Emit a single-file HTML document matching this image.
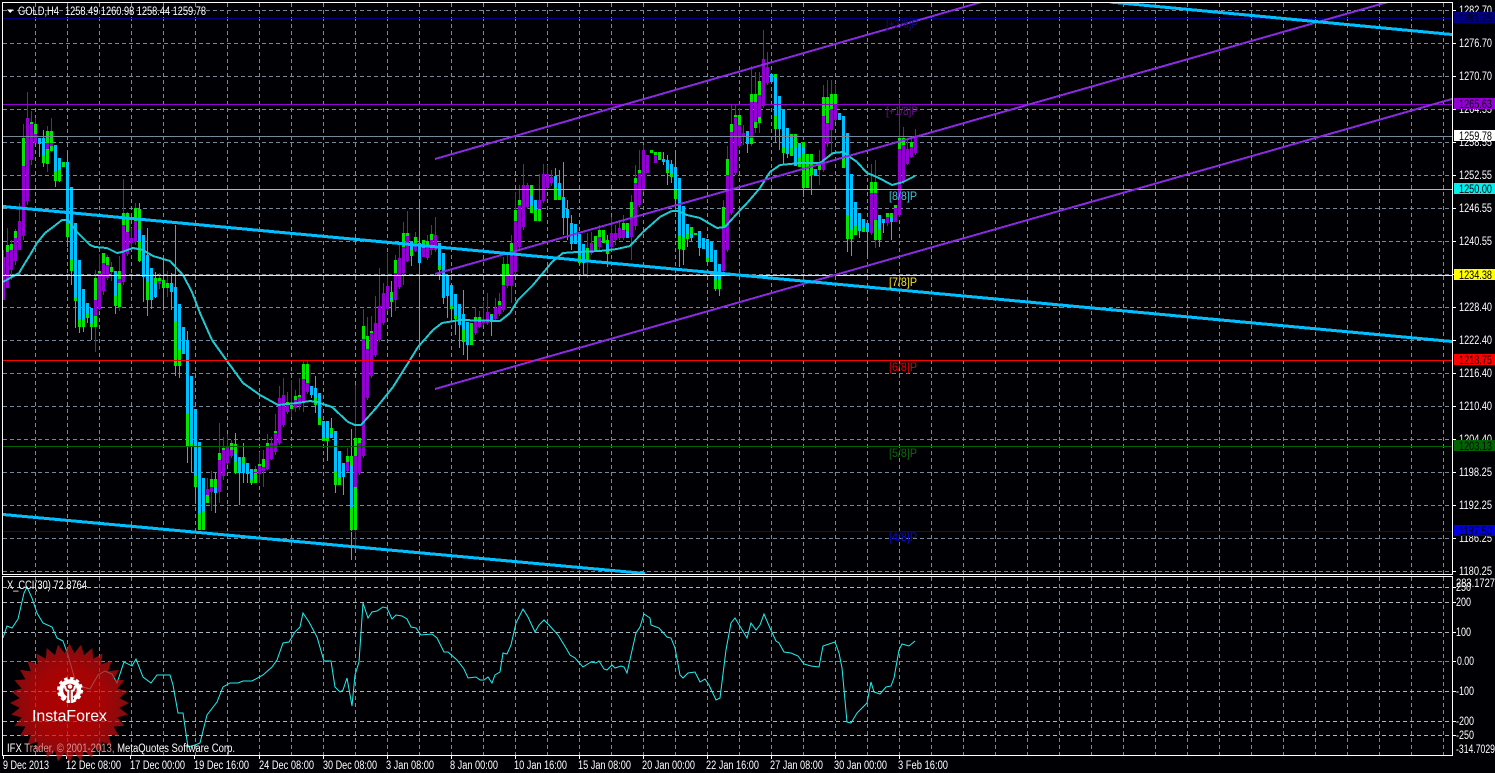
<!DOCTYPE html>
<html><head><meta charset="utf-8"><title>GOLD,H4</title>
<style>
html,body{margin:0;padding:0;background:#000;width:1495px;height:773px;overflow:hidden}
svg{display:block}
text{font-family:"Liberation Sans",sans-serif;font-size:11.5px;fill:#fff}
.g{stroke:#778899;stroke-width:1;stroke-dasharray:4 3;fill:none}
.s{stroke:#aeb6c0;stroke-width:1;stroke-dasharray:4 3;fill:none}
.c{shape-rendering:crispEdges;fill:none}
.k{fill:#000}
.l{font-size:12px}
</style></head><body>
<svg width="1495" height="773" viewBox="0 0 1495 773" xmlns="http://www.w3.org/2000/svg">
<defs>
<clipPath id="m"><rect x="3" y="3" width="1449" height="571"/></clipPath>
<clipPath id="n"><rect x="3" y="577" width="1449" height="178"/></clipPath>
<radialGradient id="rg" gradientUnits="userSpaceOnUse" cx="0" cy="0" r="60"><stop offset="0" stop-color="#f00000"/><stop offset=".55" stop-color="#e60505"/><stop offset="1" stop-color="#b21114"/></radialGradient>
<linearGradient id="tg" gradientUnits="userSpaceOnUse" x1="7" y1="0" x2="235" y2="0"><stop offset="0" stop-color="#fff"/><stop offset=".07" stop-color="#fff"/><stop offset=".1" stop-color="#d89090"/><stop offset=".47" stop-color="#d89090"/><stop offset=".5" stop-color="#fff"/><stop offset="1" stop-color="#fff"/></linearGradient>
</defs>
<rect width="1495" height="773" fill="#000004"/>

<g class="c">
<path class="g" d="M3 10.5H1452M3 43.5H1452M3 76.5H1452M3 109.5H1452M3 142.5H1452M3 175.5H1452M3 208.5H1452M3 241.5H1452M3 274.5H1452M3 307.5H1452M3 340.5H1452M3 373.5H1452M3 406.5H1452M3 439.5H1452M3 472.5H1452M3 505.5H1452M3 538.5H1452M3 571.5H1452"/>
<path class="g" d="M35.5 3V574M67.5 3V574M99.5 3V574M131.5 3V574M163.5 3V574M195.5 3V574M227.5 3V574M259.5 3V574M291.5 3V574M323.5 3V574M355.5 3V574M387.5 3V574M419.5 3V574M451.5 3V574M483.5 3V574M515.5 3V574M547.5 3V574M579.5 3V574M611.5 3V574M643.5 3V574M675.5 3V574M707.5 3V574M739.5 3V574M771.5 3V574M803.5 3V574M835.5 3V574M867.5 3V574M899.5 3V574M931.5 3V574M963.5 3V574M995.5 3V574M1027.5 3V574M1059.5 3V574M1091.5 3V574M1123.5 3V574M1155.5 3V574M1187.5 3V574M1219.5 3V574M1251.5 3V574M1283.5 3V574M1315.5 3V574M1347.5 3V574M1379.5 3V574M1411.5 3V574M1443.5 3V574"/>
<path class="g" d="M35.5 577V755M67.5 577V755M99.5 577V755M131.5 577V755M163.5 577V755M195.5 577V755M227.5 577V755M259.5 577V755M291.5 577V755M323.5 577V755M355.5 577V755M387.5 577V755M419.5 577V755M451.5 577V755M483.5 577V755M515.5 577V755M547.5 577V755M579.5 577V755M611.5 577V755M643.5 577V755M675.5 577V755M707.5 577V755M739.5 577V755M771.5 577V755M803.5 577V755M835.5 577V755M867.5 577V755M899.5 577V755M931.5 577V755M963.5 577V755M995.5 577V755M1027.5 577V755M1059.5 577V755M1091.5 577V755M1123.5 577V755M1155.5 577V755M1187.5 577V755M1219.5 577V755M1251.5 577V755M1283.5 577V755M1315.5 577V755M1347.5 577V755M1379.5 577V755M1411.5 577V755M1443.5 577V755"/>
<path class="s" d="M3 587.5H1452M3 602.5H1452M3 632.5H1452M3 691.5H1452M3 721.5H1452M3 735.5H1452"/>
<path class="g" d="M3 661.5H1452"/>
</g>

<g class="c" clip-path="url(#m)">
<!-- purple wicks -->
<path stroke="#9400D3" stroke-width="1" d="M3.5 250V300M7.5 228V288M11.5 240V280M15.5 229V265M19.5 203V250M23.5 124V240M27.5 92V205M31.5 111V165M35.5 118V143M47.5 126V172M51.5 118V152M95.5 270V352M99.5 254V310M103.5 253V295M107.5 255V280M111.5 262V281M119.5 256V311M123.5 179V285M127.5 212V256M131.5 228V250M135.5 203V245M159.5 273V289M167.5 271V297M207.5 478V503M211.5 471V511M219.5 423V503M223.5 437V480M227.5 434V465M231.5 440V458M255.5 466V483M259.5 452V483M263.5 450V487M267.5 434V470M271.5 437V460M275.5 414V455M279.5 386V445M283.5 378V427M287.5 392V414M291.5 380V417M295.5 390V412M299.5 378V410M303.5 361V412M307.5 361V394M347.5 448V472M355.5 385V545M359.5 438V475M363.5 309V458M367.5 317V400M371.5 316V378M375.5 296V357M379.5 268V342M383.5 283V325M387.5 253V311M395.5 255V311M399.5 244V289M403.5 222V285M407.5 211V262M415.5 232V252M427.5 235V260M431.5 225V255M435.5 217V252M475.5 307V335M479.5 311V328M483.5 302V325M487.5 293V325M495.5 298V322M499.5 293V316M503.5 257V312M507.5 255V288M511.5 235V303M515.5 192V275M519.5 185V250M523.5 164V230M527.5 183V209M539.5 174V222M543.5 164V203M547.5 165V190M551.5 170V186M587.5 233V278M591.5 232V255M599.5 225V250M611.5 217V250M615.5 225V245M619.5 220V240M623.5 215V240M631.5 195V260M635.5 165V230M639.5 150V207M643.5 145V192M723.5 200V275M727.5 146V252M731.5 105V215M735.5 105V175M739.5 108V148M743.5 125V145M751.5 66V146M755.5 72V133M759.5 72V133M763.5 30V108M767.5 52V85M819.5 150V185M823.5 85V172M827.5 80V147M831.5 80V153M835.5 85V122M871.5 164V235M875.5 160V248M887.5 213V226M895.5 205V222M899.5 99V217M903.5 127V184M907.5 140V165M911.5 138V158M915.5 129V155"/>
<!-- blue wicks -->
<path stroke="#00BFFF" stroke-width="1" d="M39.5 138V157M43.5 130V167M55.5 145V187M59.5 158V182M67.5 152V247M71.5 187V285M75.5 223V328M79.5 260V333M83.5 289V332M87.5 303V323M91.5 308V340M115.5 271V314M139.5 203V262M143.5 235V302M147.5 228V316M151.5 268V309M155.5 272V298M163.5 257V310M171.5 273V310M175.5 225V376M179.5 304V378M187.5 331V463M191.5 376V473M195.5 409V503M215.5 472V513M235.5 433V474M239.5 457V505M243.5 443V483M247.5 463V483M251.5 469V485M315.5 376V413M311.5 386V398M327.5 421V461M331.5 418V438M335.5 431V493M343.5 463V495M351.5 429V560M391.5 281V317M419.5 200V346M411.5 242V266M439.5 243V280M443.5 253V304M447.5 275V318M451.5 285V320M455.5 294V335M459.5 304V348M463.5 290V355M467.5 322V360M491.5 314V336M563.5 162V235M567.5 200V240M571.5 215V250M555.5 168V190M559.5 170V197M579.5 234V265M583.5 244V275M607.5 235V267M663.5 152V165M667.5 155V185M671.5 160V183M675.5 150V205M679.5 178V267M683.5 206V265M687.5 224V247M691.5 227V241M699.5 231V256M715.5 250V291M719.5 264V296M747.5 131V153M775.5 74V142M779.5 96V150M783.5 109V165M787.5 128V158M803.5 142V197M811.5 154V195M847.5 133V252M851.5 174V256M859.5 213V238M867.5 223V257M879.5 215V247M891.5 213V240M883.5 219V233"/>
<!-- purple bodies -->
<path stroke="#9400D3" stroke-width="3" d="M3.5 257V300M7.5 252V288M11.5 250V270M15.5 238V261M19.5 221V250M23.5 166V236M27.5 118V201M31.5 124V160M35.5 134V143M47.5 143V149M51.5 143V146M95.5 300V316M99.5 273V309M103.5 263V291M107.5 265V278M119.5 279V283M123.5 225V282M127.5 232V254M131.5 238V243M135.5 221V242M159.5 281V284M207.5 489V495M211.5 487V492M219.5 460V492M223.5 450V476M227.5 447V463M231.5 450V456M255.5 472V473M259.5 466V474M263.5 467V471M267.5 446V469M271.5 443V459M275.5 433V452M279.5 398V443M283.5 395V425M287.5 405V412M295.5 400V408M299.5 397V405M303.5 379V402M307.5 383V392M347.5 462V471M355.5 456V487M359.5 443V473M363.5 339V456M367.5 349V398M371.5 333V376M375.5 323V355M379.5 306V340M383.5 293V323M387.5 286V309M395.5 273V300M399.5 258V287M403.5 247V273M407.5 236V261M415.5 243V251M423.5 248V257M427.5 247V258M431.5 240V250M435.5 235V250M475.5 320V333M479.5 322V327M483.5 321V323M487.5 312V323M495.5 308V319M499.5 305V314M503.5 285V310M507.5 275V286M511.5 252V286M515.5 221V272M519.5 205V247M523.5 185V227M527.5 185V207M539.5 200V209M543.5 174V201M547.5 174V188M551.5 177V183M591.5 243V253M599.5 237V247M611.5 233V247M615.5 233V240M619.5 228V238M623.5 230V238M631.5 217V237M635.5 183V226M639.5 173V205M643.5 150V189M647.5 155V173M655.5 155V163M723.5 227V271M727.5 175V250M731.5 132V213M735.5 117V173M739.5 125V146M743.5 133V136M751.5 102V138M755.5 102V122M759.5 95V117M763.5 59V106M767.5 67V83M823.5 116V170M827.5 123V144M831.5 109V130M835.5 104V120M871.5 193V233M875.5 193V220M887.5 217V223M895.5 208V222M899.5 149V215M903.5 145V182M907.5 149V164M911.5 147V157M915.5 137V153"/>
<!-- blue bodies -->
<path stroke="#00BFFF" stroke-width="3" d="M39.5 138V144M43.5 138V156M55.5 145V171M59.5 158V170M67.5 162V223M71.5 187V259M75.5 223V298M79.5 260V319M83.5 289V319M87.5 303V313M91.5 308V323M115.5 271V296M139.5 230V242M143.5 235V277M147.5 255V282M151.5 268V300M155.5 283V297M171.5 283V292M175.5 287V322M179.5 304V350M183.5 327V354M187.5 340V413M191.5 376V444M195.5 409V476M199.5 442V513M203.5 478V511M215.5 488V493M235.5 453V462M239.5 457V473M243.5 464V473M247.5 463V474M251.5 469V479M311.5 386V395M315.5 388V398M319.5 393V418M323.5 421V437M327.5 421V438M331.5 433V438M335.5 431V471M339.5 451V477M343.5 463V477M351.5 465V507M391.5 297V300M411.5 242V250M419.5 243V263M439.5 243V265M443.5 253V298M447.5 275V296M451.5 285V305M455.5 294V315M459.5 304V325M463.5 314V329M467.5 322V345M491.5 316V322M531.5 196V205M535.5 200V210M555.5 176V188M559.5 183V195M563.5 197V218M567.5 209V218M571.5 223V244M575.5 224V244M579.5 234V255M583.5 244V263M607.5 244V250M627.5 232V238M663.5 159V162M667.5 160V170M671.5 164V174M675.5 167V190M679.5 178V235M683.5 206V237M687.5 224V234M691.5 234V238M699.5 231V248M703.5 238V249M707.5 239V257M711.5 242V262M715.5 250V280M719.5 264V280M747.5 131V144M771.5 74V82M775.5 77V115M779.5 96V129M783.5 109V147M787.5 128V154M791.5 135V148M795.5 147V166M799.5 143V157M803.5 147V154M815.5 169V176M839.5 113V120M843.5 116V158M847.5 133V215M851.5 174V230M855.5 202V226M859.5 213V231M863.5 219V227M867.5 223V232M879.5 215V229M883.5 219V223M891.5 217V222"/>
<!-- green bodies -->
<path stroke="#00E800" stroke-width="3" d="M7.5 245V252M11.5 244V250M15.5 231V238M23.5 138V166M31.5 122V124M35.5 124V134M43.5 156V163M47.5 131V143M47.5 149V164M51.5 131V143M51.5 146V151M55.5 171V181M59.5 170V181M63.5 162V167M67.5 223V237M71.5 259V271M75.5 298V301M79.5 319V327M83.5 319V327M87.5 313V318M91.5 323V327M95.5 278V300M95.5 316V327M99.5 271V273M103.5 253V263M107.5 257V265M111.5 267V272M115.5 296V306M119.5 271V279M119.5 283V307M123.5 213V225M127.5 213V232M135.5 208V221M139.5 209V230M139.5 242V261M147.5 282V300M155.5 278V283M159.5 278V281M163.5 280V288M167.5 283V288M175.5 322V366M179.5 350V366M187.5 413V446M191.5 444V446M195.5 476V487M199.5 513V530M203.5 511V530M207.5 495V503M211.5 479V487M215.5 479V488M219.5 453V460M223.5 448V450M231.5 443V450M235.5 444V453M235.5 462V473M243.5 457V464M251.5 479V483M255.5 469V472M255.5 473V483M259.5 464V466M263.5 459V467M267.5 443V446M275.5 431V433M287.5 402V405M291.5 405V409M295.5 396V400M299.5 395V397M303.5 364V379M307.5 364V383M315.5 398V405M319.5 418V425M323.5 437V441M327.5 438V441M331.5 428V433M335.5 471V485M339.5 477V485M347.5 456V462M351.5 456V465M351.5 507V530M355.5 438V456M355.5 487V530M359.5 438V443M363.5 326V339M367.5 336V349M371.5 331V333M391.5 292V297M391.5 300V302M395.5 260V273M403.5 233V247M407.5 233V236M411.5 250V256M415.5 237V243M423.5 240V248M427.5 241V247M431.5 234V240M439.5 265V270M451.5 305V309M455.5 315V319M463.5 329V342M471.5 323V345M475.5 317V320M479.5 317V322M491.5 314V316M499.5 301V305M503.5 264V285M507.5 264V275M511.5 243V252M515.5 210V221M519.5 200V205M531.5 185V196M531.5 205V213M535.5 210V221M539.5 209V221M555.5 188V200M559.5 195V200M579.5 255V263M587.5 248V261M595.5 236V250M599.5 230V237M603.5 230V243M607.5 240V244M607.5 250V254M623.5 223V230M627.5 223V232M631.5 202V217M635.5 178V183M639.5 170V173M651.5 150V153M655.5 152V155M659.5 152V160M667.5 170V173M671.5 174V177M675.5 190V199M679.5 235V249M683.5 237V250M687.5 234V239M691.5 227V234M695.5 233V235M707.5 257V262M715.5 280V289M719.5 280V289M723.5 207V227M727.5 159V175M731.5 124V132M735.5 115V117M739.5 115V125M751.5 94V102M751.5 138V144M755.5 94V102M755.5 122V128M759.5 81V95M759.5 117V123M775.5 74V77M775.5 115V129M783.5 147V153M791.5 134V135M791.5 148V156M795.5 134V147M799.5 157V167M803.5 142V147M803.5 154V188M807.5 154V188M811.5 154V175M819.5 163V170M823.5 97V116M827.5 97V123M831.5 94V109M835.5 94V104M843.5 158V168M847.5 215V239M851.5 230V239M855.5 226V235M863.5 227V232M871.5 182V193M875.5 182V193M875.5 220V240M879.5 229V240M887.5 213V217M891.5 213V217M895.5 205V208M899.5 138V149M903.5 138V145M911.5 142V147"/>

<!-- moving average -->
<polyline fill="none" stroke="#1FC9D2" stroke-width="2" points="3,282 10,278 19,273 25,263 30,255 37,243 45,233 53,227 62,220 68,220 77,232 90,245 95,247 107,248 117,253 122,252 133,248 143,250 153,256 170,261 183,275 192,292 200,313 212,340 227,361 243,383 260,395 278,405 297,403 310,401 317,402 332,407 348,422 355,425 361,425 377,407 393,387 410,360 418,347 433,330 442,323 460,320 500,321 510,313 518,300 533,285 543,273 552,262 563,253 577,252 600,251 617,249 630,246 643,232 660,217 672,211 678,211 687,215 700,218 717,228 725,227 733,218 748,202 760,188 770,172 780,165 800,163 820,163 833,153 843,152 857,162 867,173 877,177 892,185 903,182 915,176"/>

<!-- horizontal levels -->
<path stroke="#000080" stroke-width="1" d="M3 18.5H1452"/>
<path stroke="#9400D3" stroke-width="1" d="M3 104.5H1452"/>
<path stroke="#778899" stroke-width="1" d="M3 136.5H1452"/>
<path stroke="#35E8E8" stroke-width="1" d="M3 189.5H1452"/>
<path stroke="#FFFF00" stroke-width="1" d="M3 275.5H1452"/>
<path stroke="#FF0000" stroke-width="1" d="M3 360.5H1452"/>
<path stroke="#006400" stroke-width="1" d="M3 446.5H1452"/>
<path stroke="#0000CD" stroke-width="1" d="M3 531.5H1452"/>

<!-- channels -->
<path stroke="#8A2BE2" stroke-width="2" d="M435 159L985 1M435 274L1388 2M435 389L1452 99"/>
<path stroke="#00BFFF" stroke-width="3" d="M3 206.500L1452 341.500M3 514.500L645 573.500M1110 2L1452 34.500"/>
</g>

<!-- Murrey labels -->
<g>
<text class="l" x="886" y="28" textLength="32" lengthAdjust="spacingAndGlyphs" style="fill:#10107a">[+2/8]P</text>
<text class="l" x="886" y="115" textLength="32" lengthAdjust="spacingAndGlyphs" style="fill:#6a1090">[+1/8]P</text>
<text class="l" x="889" y="200" textLength="28" lengthAdjust="spacingAndGlyphs" style="fill:#3cc8d8">[8/8]P</text>
<text class="l" x="889" y="286" textLength="28" lengthAdjust="spacingAndGlyphs" style="fill:#f0e020">[7/8]P</text>
<text class="l" x="889" y="371" textLength="28" lengthAdjust="spacingAndGlyphs" style="fill:#e00000">[6/8]P</text>
<text class="l" x="889" y="457" textLength="28" lengthAdjust="spacingAndGlyphs" style="fill:#0a6a0a">[5/8]P</text>
<text class="l" x="889" y="541" textLength="28" lengthAdjust="spacingAndGlyphs" style="fill:#0a0ad0">[4/8]P</text>
</g>

<!-- CCI -->
<g clip-path="url(#n)">
<polyline class="c" fill="none" stroke="#20F0F0" stroke-width="1" style="shape-rendering:auto" points="3,638 7,626 12,628 18,619 24,593 27,587 32,598 37,613 43,623 52,627 57,638 63,641 68,655 75,680 83,687 90,689 98,675 105,671 112,674 117,683 124,662 132,666 136,659 143,677 151,683 157,675 170,675 173,685 178,713 183,713 188,747 195,745 200,743 207,715 217,702 223,687 230,683 238,683 243,681 252,681 263,675 272,667 277,660 283,643 289,642 295,632 300,627 303,613 309,622 317,637 324,661 331,661 335,687 340,692 343,690 347,678 352,706 355,675 359,662 363,603 368,618 372,612 377,611 383,607 387,608 392,619 396,615 402,616 407,619 411,627 416,628 421,635 432,634 437,638 444,652 448,652 457,660 464,669 468,678 476,677 480,680 484,680 488,677 492,683 495,675 500,672 503,653 507,654 511,645 516,623 523,609 528,617 535,632 539,625 544,620 549,625 558,635 566,648 570,655 575,658 583,667 591,662 596,663 599,661 604,669 607,670 612,665 615,668 621,666 624,667 627,673 631,655 636,633 640,627 644,614 650,618 651,625 659,628 667,637 671,638 675,648 680,675 683,678 688,673 695,672 700,682 705,679 709,685 716,700 720,698 726,650 731,623 735,618 741,628 747,638 751,623 756,630 760,625 764,614 770,628 776,641 779,643 784,652 791,653 798,656 804,664 811,666 819,667 823,646 835,642 839,653 842,668 847,722 851,723 857,713 863,707 867,703 871,682 874,692 880,694 886,687 891,686 894,678 899,650 902,644 909,646 915,641"/>
</g>

<!-- frames -->
<g class="c" stroke="#fff" stroke-width="1" fill="none">
<path d="M2.500 2.500H1452.500V574.500H2.500Z"/>
<path d="M2.500 576.500H1452.500V755.500H2.500Z"/>
<path d="M1453 10.500h3M1453 43.500h3M1453 76.500h3M1453 109.500h3M1453 142.500h3M1453 175.500h3M1453 208.500h3M1453 241.500h3M1453 274.500h3M1453 307.500h3M1453 340.500h3M1453 373.500h3M1453 406.500h3M1453 439.500h3M1453 472.500h3M1453 505.500h3M1453 538.500h3M1453 571.500h3"/>
<path d="M1453 587.500h3M1453 602.500h3M1453 632.500h3M1453 661.500h3M1453 691.500h3M1453 721.500h3M1453 735.500h3"/>
<path d="M3.500 756v3M66.500 756v3M130.500 756v3M194.500 756v3M259.500 756v3M323.500 756v3M387.500 756v3M451.500 756v3M515.500 756v3M579.500 756v3M643.500 756v3M707.500 756v3M771.500 756v3M835.500 756v3M899.500 756v3"/>
</g>

<!-- price axis -->
<g>
<text x="1459" y="14" textLength="33" lengthAdjust="spacingAndGlyphs">1282.70</text>
<text x="1459" y="47" textLength="33" lengthAdjust="spacingAndGlyphs">1276.70</text>
<text x="1459" y="80" textLength="33" lengthAdjust="spacingAndGlyphs">1270.70</text>
<text x="1459" y="113" textLength="33" lengthAdjust="spacingAndGlyphs">1264.55</text>
<text x="1459" y="146" textLength="33" lengthAdjust="spacingAndGlyphs">1258.55</text>
<text x="1459" y="179" textLength="33" lengthAdjust="spacingAndGlyphs">1252.55</text>
<text x="1459" y="212" textLength="33" lengthAdjust="spacingAndGlyphs">1246.55</text>
<text x="1459" y="245" textLength="33" lengthAdjust="spacingAndGlyphs">1240.55</text>
<text x="1459" y="311" textLength="33" lengthAdjust="spacingAndGlyphs">1228.40</text>
<text x="1459" y="344" textLength="33" lengthAdjust="spacingAndGlyphs">1222.40</text>
<text x="1459" y="377" textLength="33" lengthAdjust="spacingAndGlyphs">1216.40</text>
<text x="1459" y="410" textLength="33" lengthAdjust="spacingAndGlyphs">1210.40</text>
<text x="1459" y="443" textLength="33" lengthAdjust="spacingAndGlyphs">1204.40</text>
<text x="1459" y="476" textLength="33" lengthAdjust="spacingAndGlyphs">1198.25</text>
<text x="1459" y="509" textLength="33" lengthAdjust="spacingAndGlyphs">1192.25</text>
<text x="1459" y="542" textLength="33" lengthAdjust="spacingAndGlyphs">1186.25</text>
<text x="1459" y="575" textLength="33" lengthAdjust="spacingAndGlyphs">1180.25</text>
</g>
<g class="c">
<rect x="1454" y="12" width="41" height="11" fill="#000080"/>
<rect x="1454" y="98" width="41" height="11" fill="#9400D3"/>
<rect x="1454" y="130" width="41" height="11" fill="#fff"/>
<rect x="1454" y="183" width="41" height="11" fill="#00F0F0"/>
<rect x="1454" y="269" width="41" height="11" fill="#FFFF00"/>
<rect x="1454" y="354" width="41" height="11" fill="#FF0000"/>
<rect x="1454" y="440" width="41" height="11" fill="#006400"/>
<rect x="1454" y="525" width="41" height="11" fill="#0000E0"/>
</g>
<g>
<text class="k" x="1459" y="22" textLength="33" lengthAdjust="spacingAndGlyphs">1281.25</text>
<text class="k" x="1459" y="108" textLength="33" lengthAdjust="spacingAndGlyphs">1265.63</text>
<text class="k" x="1459" y="140" textLength="33" lengthAdjust="spacingAndGlyphs">1259.78</text>
<text class="k" x="1459" y="193" textLength="33" lengthAdjust="spacingAndGlyphs">1250.00</text>
<text class="k" x="1459" y="279" textLength="33" lengthAdjust="spacingAndGlyphs">1234.38</text>
<text class="k" x="1459" y="364" textLength="33" lengthAdjust="spacingAndGlyphs">1218.75</text>
<text class="k" x="1459" y="450" textLength="33" lengthAdjust="spacingAndGlyphs">1203.13</text>
<text class="k" x="1459" y="535" textLength="33" lengthAdjust="spacingAndGlyphs">1187.50</text>
</g>

<!-- CCI axis -->
<g>
<text x="1456" y="587" textLength="39" lengthAdjust="spacingAndGlyphs">283.1727</text>
<text x="1456" y="591" textLength="15" lengthAdjust="spacingAndGlyphs">250</text>
<text x="1456" y="606" textLength="15" lengthAdjust="spacingAndGlyphs">200</text>
<text x="1456" y="636" textLength="15" lengthAdjust="spacingAndGlyphs">100</text>
<text x="1457" y="665" textLength="17" lengthAdjust="spacingAndGlyphs">0.00</text>
<text x="1456" y="695" textLength="18" lengthAdjust="spacingAndGlyphs">-100</text>
<text x="1456" y="725" textLength="18" lengthAdjust="spacingAndGlyphs">-200</text>
<text x="1456" y="739" textLength="18" lengthAdjust="spacingAndGlyphs">-250</text>
<text x="1456" y="753" textLength="39" lengthAdjust="spacingAndGlyphs">-314.7029</text>
</g>

<!-- header text -->
<path d="M7 9.500H13.500L10.200 13Z" fill="#fff"/>
<text x="18" y="15" textLength="41" lengthAdjust="spacingAndGlyphs">GOLD,H4</text>
<text x="65" y="15" textLength="141" lengthAdjust="spacingAndGlyphs">1258.49 1260.98 1258.44 1259.78</text>
<text x="7" y="589" textLength="80" lengthAdjust="spacingAndGlyphs">X_CCI(30) 72.8764</text>

<!-- InstaForex logo -->
<g transform="translate(69.500 703)" opacity=".72">
<path fill="url(#rg)" d="M59.500 0L49.800 4.900L58.400 11.600L47.800 14.500L55 22.800L44.100 23.600L49.500 33.100L38.700 31.700L42.100 42.100L31.700 38.700L33.100 49.500L23.600 44.100L22.800 55L14.500 47.800L11.600 58.400L4.900 49.800L0 59.500L-4.900 49.800L-11.600 58.400L-14.500 47.800L-22.800 55L-23.600 44.100L-33.100 49.500L-31.700 38.700L-42.100 42.100L-38.700 31.700L-49.500 33.100L-44.100 23.600L-55 22.800L-47.800 14.500L-58.400 11.600L-49.800 4.900L-59.500 0L-49.800 -4.900L-58.400 -11.600L-47.800 -14.500L-55 -22.800L-44.100 -23.600L-49.500 -33.100L-38.700 -31.700L-42.100 -42.100L-31.700 -38.700L-33.100 -49.500L-23.600 -44.100L-22.800 -55L-14.500 -47.800L-11.600 -58.400L-4.900 -49.800L0 -59.500L4.900 -49.800L11.600 -58.400L14.500 -47.800L22.800 -55L23.600 -44.100L33.100 -49.500L31.700 -38.700L42.100 -42.100L38.700 -31.700L49.500 -33.100L44.100 -23.600L55 -22.800L47.800 -14.500L58.400 -11.600L49.800 -4.900Z"/>
</g>
<g transform="translate(70 690)" fill="none" stroke="#fff">
<circle r="11.500" stroke-width="3" stroke-dasharray="3.400 2.600"/>
<path stroke-width="4.500" d="M-4 8.500A9 9 0 1 1 4 8.500"/>
<circle cx="0" cy="-3.500" r="2.300" fill="#fff" stroke="none"/>
<path stroke-width="2.200" d="M-5 -4Q-4.500 1 -1.800 1V13M5 -4Q4.500 1 1.800 1V13"/>
</g>
<text x="32" y="721" textLength="75" lengthAdjust="spacingAndGlyphs" style="font-size:16px;fill:#fff">InstaForex</text>
<text x="7" y="752" textLength="228" lengthAdjust="spacingAndGlyphs" style="fill:url(#tg)">IFX Trader, © 2001-2013, MetaQuotes Software Corp.</text>

<!-- time axis -->
<g>
<text x="3" y="769" textLength="46" lengthAdjust="spacingAndGlyphs">9 Dec 2013</text>
<text x="66" y="769" textLength="55" lengthAdjust="spacingAndGlyphs">12 Dec 08:00</text>
<text x="130" y="769" textLength="55" lengthAdjust="spacingAndGlyphs">17 Dec 00:00</text>
<text x="194" y="769" textLength="55" lengthAdjust="spacingAndGlyphs">19 Dec 16:00</text>
<text x="259" y="769" textLength="55" lengthAdjust="spacingAndGlyphs">24 Dec 08:00</text>
<text x="323" y="769" textLength="54" lengthAdjust="spacingAndGlyphs">30 Dec 08:00</text>
<text x="386" y="769" textLength="48" lengthAdjust="spacingAndGlyphs">3 Jan 08:00</text>
<text x="450" y="769" textLength="48" lengthAdjust="spacingAndGlyphs">8 Jan 00:00</text>
<text x="514" y="769" textLength="53" lengthAdjust="spacingAndGlyphs">10 Jan 16:00</text>
<text x="578" y="769" textLength="53" lengthAdjust="spacingAndGlyphs">15 Jan 08:00</text>
<text x="642" y="769" textLength="53" lengthAdjust="spacingAndGlyphs">20 Jan 00:00</text>
<text x="706" y="769" textLength="53" lengthAdjust="spacingAndGlyphs">22 Jan 16:00</text>
<text x="770" y="769" textLength="53" lengthAdjust="spacingAndGlyphs">27 Jan 08:00</text>
<text x="834" y="769" textLength="53" lengthAdjust="spacingAndGlyphs">30 Jan 00:00</text>
<text x="898" y="769" textLength="50" lengthAdjust="spacingAndGlyphs">3 Feb 16:00</text>
</g>
</svg>
</body></html>
